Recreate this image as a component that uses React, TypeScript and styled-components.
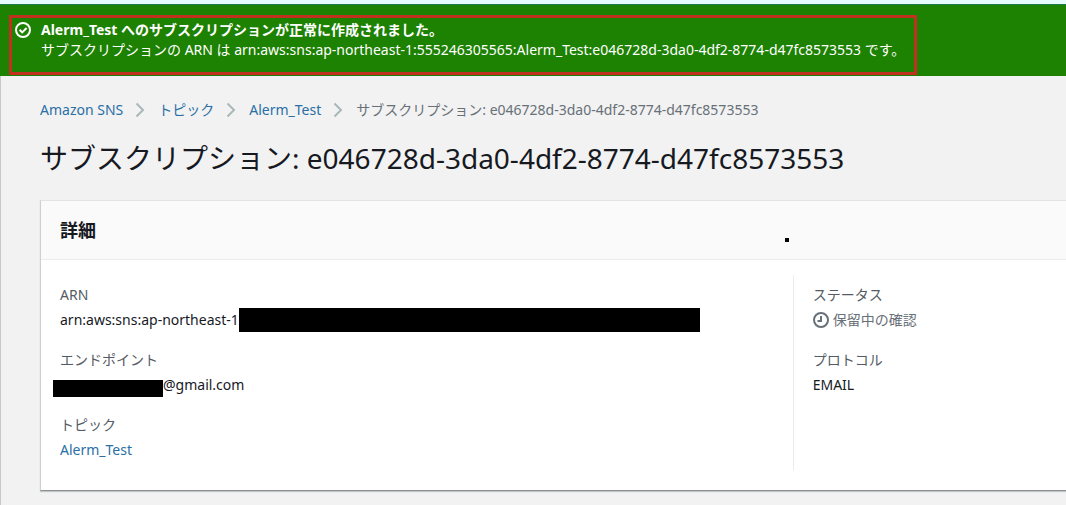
import React from "react";
import styled, { createGlobalStyle } from "styled-components";

const GlobalStyle = createGlobalStyle`
  * { box-sizing: border-box; }
  body {
    margin: 0;
    background: #f2f2f2;
    color: #16191f;
    font-family: "Noto Sans", "Noto Sans CJK JP", sans-serif;
    font-size: 14px;
    line-height: 20px;
  }
`;

const Page = styled.div`
  display: flex;
  flex-direction: column;
  min-height: 100vh;
  overflow-x: hidden;
  border-top: 4px solid #e6fbfc;
`;

const Banner = styled.div`
  display: flex;
  padding: 10px 0 1px 9px;
  background: #1d8102;
  border-top: 1px solid #1f7c4c;
  color: #fff;
`;

const Highlight = styled.div`
  display: flex;
  gap: 10px;
  padding: 2px 9px 12px 3px;
  border: 3px solid #c0311f;
`;

const BannerIcon = styled.svg`
  flex: none;
  width: 16px;
  height: 16px;
  margin-top: 2px;
`;

const BannerText = styled.p`
  margin: 0;
  white-space: nowrap;
`;

const Main = styled.main`
  flex: 1;
  padding: 24px 0 14px 39px;
  border-left: 1px solid #c8c8c8;
`;

const Crumbs = styled.ol`
  display: flex;
  align-items: center;
  margin: 0;
  padding: 0;
  list-style: none;
  white-space: nowrap;
  color: #687078;
`;

const Crumb = styled.li`
  display: flex;
  align-items: center;
`;

const Chevron = styled.svg`
  width: 10px;
  height: 16px;
  margin: 0 13px 0 12px;
`;

const Link = styled.a`
  color: #2a6fa5;
  text-decoration: none;
`;

const Title = styled.h1`
  margin: 20px 0 24px;
  font-size: 28px;
  line-height: 36px;
  font-weight: 400;
  white-space: nowrap;
`;

const Card = styled.section`
  background: #fff;
  border: 1px solid #e3e3e3;
  border-right: 0;
  border-left-color: #cfcfcf;
  border-bottom-color: #8d9090;
  box-shadow: 0 1px 1px rgba(0, 28, 36, 0.2);
`;

const CardHeader = styled.header`
  position: relative;
  padding: 17px 19px;
  background: #fafafa;
  border-bottom: 1px solid #eaeded;
`;

const CardTitle = styled.h2`
  margin: 0;
  font-size: 18px;
  line-height: 24px;
  font-weight: 700;
`;

const Mark = styled.span`
  position: absolute;
  right: 27%;
  bottom: 17px;
  width: 4px;
  height: 4px;
  background: #000;
`;

const Columns = styled.div`
  display: grid;
  grid-template-columns: 11fr 4fr;
  padding: 15px 0 20px;
`;

const Column = styled.dl<{ $divided?: boolean }>`
  display: flex;
  flex-direction: column;
  gap: 20px;
  margin: 0;
  padding: 10px 19px;
  border-left: ${(p) => (p.$divided ? "1px solid #eaeded" : "0")};
`;

const Field = styled.div`
  display: flex;
  flex-direction: column;
  gap: 5px;
`;

const Label = styled.dt`
  height: 20px;
  color: #545b64;
`;

const Value = styled.dd<{ $muted?: boolean }>`
  display: flex;
  align-items: center;
  gap: ${(p) => (p.$muted ? "4px" : "0")};
  height: 20px;
  margin: 0;
  white-space: nowrap;
  color: ${(p) => (p.$muted ? "#687078" : "inherit")};
`;

const ArnMask = styled.span`
  width: 461px;
  height: 24px;
  background: #000;
`;

const EmailMask = styled.span`
  align-self: flex-end;
  width: 110px;
  height: 17px;
  margin: 0 0 -2px -7px;
  background: #000;
`;

const StatusIcon = styled.svg`
  width: 16px;
  height: 16px;
`;

const trail = ["Amazon SNS", "トピック", "Alerm_Test"];

export default function App() {
  return (
    <>
      <GlobalStyle />
      <Page>
        <Banner role="status">
          <Highlight>
            <BannerIcon viewBox="0 0 16 16" fill="none" stroke="#fff" strokeWidth="2" aria-hidden="true">
              <circle cx="8" cy="8" r="7" />
              <path d="M4.6 7.8 7.2 10.4 11.6 6" />
            </BannerIcon>
            <BannerText>
              <strong>Alerm_Test へのサブスクリプションが正常に作成されました。</strong>
              <br />
              サブスクリプションの ARN は arn:aws:sns:ap-northeast-1:555246305565:Alerm_Test:e046728d-3da0-4df2-8774-d47fc8573553 です。
            </BannerText>
          </Highlight>
        </Banner>
        <Main>
          <nav aria-label="パンくずリスト">
            <Crumbs>
              {trail.map((name) => (
                <Crumb key={name}>
                  <Link href="#">{name}</Link>
                  <Chevron viewBox="0 0 10 16" fill="none" stroke="#aab7b8" strokeWidth="2" aria-hidden="true">
                    <path d="M1.5 1.5 8 8 1.5 14.5" />
                  </Chevron>
                </Crumb>
              ))}
              <Crumb aria-current="page">サブスクリプション: e046728d-3da0-4df2-8774-d47fc8573553</Crumb>
            </Crumbs>
          </nav>
          <Title>サブスクリプション: e046728d-3da0-4df2-8774-d47fc8573553</Title>
          <Card>
            <CardHeader>
              <CardTitle>詳細</CardTitle>
              <Mark />
            </CardHeader>
            <Columns>
              <Column>
                <Field>
                  <Label>ARN</Label>
                  <Value>
                    arn:aws:sns:ap-northeast-1
                    <ArnMask />
                  </Value>
                </Field>
                <Field>
                  <Label>エンドポイント</Label>
                  <Value>
                    <EmailMask />
                    @gmail.com
                  </Value>
                </Field>
                <Field>
                  <Label>トピック</Label>
                  <Value>
                    <Link href="#">Alerm_Test</Link>
                  </Value>
                </Field>
              </Column>
              <Column $divided>
                <Field>
                  <Label>ステータス</Label>
                  <Value $muted>
                    <StatusIcon viewBox="0 0 16 16" fill="none" stroke="#687078" strokeWidth="2" aria-hidden="true">
                      <circle cx="8" cy="8" r="7" />
                      <path d="M8 4v5H4.5" />
                    </StatusIcon>
                    保留中の確認
                  </Value>
                </Field>
                <Field>
                  <Label>プロトコル</Label>
                  <Value>EMAIL</Value>
                </Field>
              </Column>
            </Columns>
          </Card>
        </Main>
      </Page>
    </>
  );
}
